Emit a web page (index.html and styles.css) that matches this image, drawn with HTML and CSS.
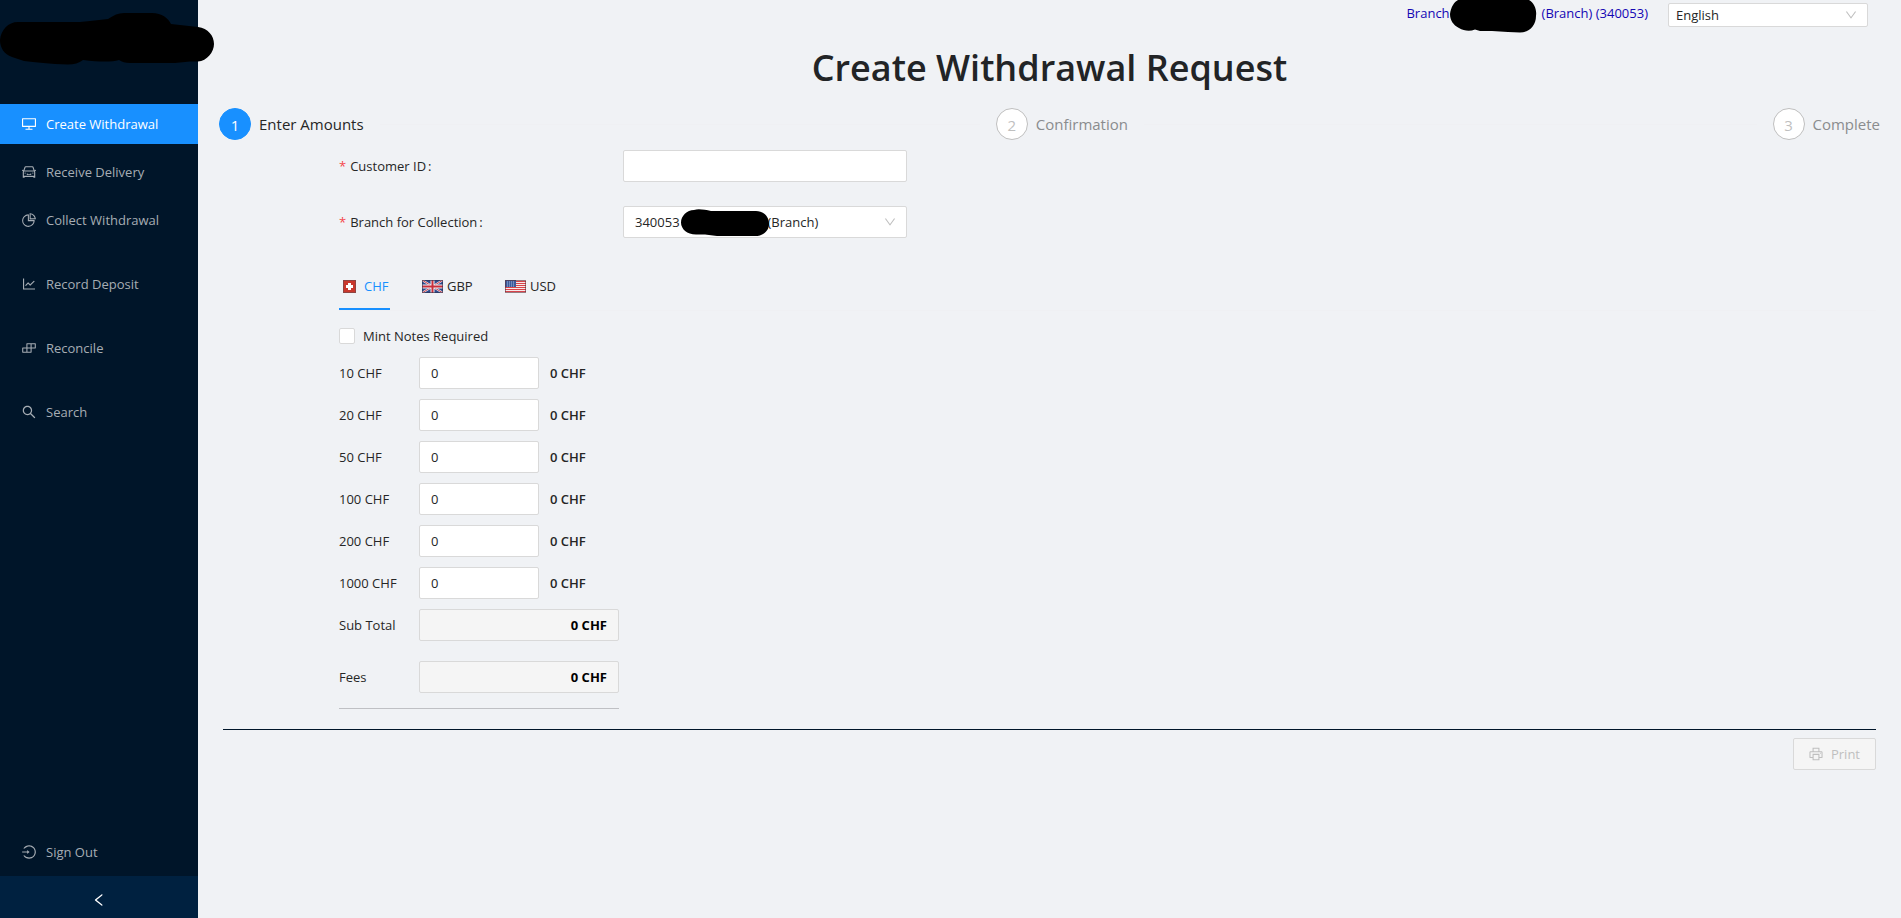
FILE: index.html
```html
<!DOCTYPE html>
<html lang="en">
<head>
<meta charset="utf-8">
<title>Create Withdrawal Request</title>
<link rel="stylesheet" href="styles.css">
</head>
<body>
<div class="app">
  <aside class="sidebar">
    <div class="brand">
      <svg class="brand-mask" width="215" height="66" viewBox="0 0 215 66" aria-hidden="true"><path d="M0 40C1 30 8 22 18 22H80L90 21 108 19C114 15 118 13 124 13H152C162 13 168 18 171 24L198 27C208 28 214 36 214 44S207 61 198 61.500H190L175 63H130C125 63 122 62 119 60 112 62 100 62 83 60 79 63 74 64.500 68 64.500 50 64 35 62 24 61L12 57C4 54 0 48 0 40Z"/></svg>
    </div>
    <nav class="menu">
      <div class="menu-group">
        <a class="menu-item active" href="#"><svg class="icon" viewBox="64 64 896 896"><path d="M928 140H96c-17.700 0-32 14.300-32 32v496c0 17.700 14.300 32 32 32h380v112H304c-8.800 0-16 7.200-16 16v48c0 4.400 3.600 8 8 8h432c4.400 0 8-3.600 8-8v-48c0-8.800-7.200-16-16-16H548V700h380c17.700 0 32-14.300 32-32V172c0-17.700-14.300-32-32-32zm-40 488H136V212h752v416z"/></svg>Create Withdrawal</a>
        <a class="menu-item" href="#"><svg class="icon" viewBox="64 64 896 896"><path d="M380 704h264c4.400 0 8-3.600 8-8v-84c0-4.400-3.600-8-8-8h-40c-4.400 0-8 3.600-8 8v36H428v-36c0-4.400-3.600-8-8-8h-40c-4.400 0-8 3.600-8 8v84c0 4.400 3.600 8 8 8zm340-123a40 40 0 1080 0 40 40 0 10-80 0zm239-167.600L935.300 372a8 8 0 00-10.900-2.900l-50.700 29.600-78.300-216.200a63.900 63.900 0 00-60.900-44.400H301.200c-34.700 0-65.500 22.400-76.200 55.500l-74.600 205.200-50.800-29.600a8 8 0 00-10.900 2.900L65 413.400c-2.200 3.800-.9 8.600 2.900 10.800l60.400 35.200-14.500 40c-1.200 3.200-1.800 6.600-1.800 10v348.200c0 15.700 11.800 28.400 26.300 28.400h67.600c12.300 0 23-9.300 25.600-22.300l7.700-37.700h545.600l7.700 37.700c2.700 13 13.300 22.300 25.600 22.300h67.600c14.500 0 26.300-12.700 26.300-28.400V509.400c0-3.400-.6-6.800-1.800-10l-14.500-40 60.300-35.200a8 8 0 003-10.800zM840 517v237H184V517l15.600-43h624.800l15.600 43zM292.700 218.100l.5-1.300.4-1.300c1.100-3.300 4.100-5.500 7.600-5.500h427.600l75.400 208H220l72.700-199.900zM224 581a40 40 0 1080 0 40 40 0 10-80 0z"/></svg>Receive Delivery</a>
        <a class="menu-item" href="#"><svg class="icon" viewBox="64 64 896 896"><path d="M864 518H506V160c0-4.400-3.600-8-8-8h-26a398.460 398.460 0 00-282.800 117.100 398.190 398.190 0 00-85.700 127.100A397.610 397.610 0 0072 552a398.460 398.460 0 00117.100 282.800c36.700 36.700 79.500 65.600 127.100 85.700A397.610 397.610 0 00472 952a398.460 398.460 0 00282.800-117.100c36.700-36.700 65.600-79.500 85.700-127.100A397.610 397.610 0 00872 552v-26c0-4.400-3.600-8-8-8zM705.700 787.800A331.590 331.590 0 01470.400 884c-88.100-.4-170.900-34.900-233.200-97.200C174.500 724.100 140 640.700 140 552c0-88.700 34.500-172.100 97.200-234.800 54.600-54.600 124.900-87.900 200.800-95.500V586h364.300c-7.700 76.300-41.300 147-96.600 201.800zM952 462.400l-2.600-28.200c-8.500-92.100-49.400-179-115.200-244.600A399.400 399.400 0 00589 74.600L560.700 72c-4.700-.4-8.700 3.200-8.700 7.900V464c0 4.400 3.600 8 8 8l384-1c4.700 0 8.400-4 8-8.600zm-332.200-58.200V147.600a332.240 332.240 0 01166.400 89.800c45.700 45.600 77 103.600 90 166.100l-256.400.7z"/></svg>Collect Withdrawal</a>
      </div>
      <div class="menu-group">
        <a class="menu-item" href="#"><svg class="icon" viewBox="64 64 896 896"><path d="M888 792H200V168c0-4.400-3.600-8-8-8h-56c-4.400 0-8 3.600-8 8v688c0 4.400 3.600 8 8 8h752c4.400 0 8-3.600 8-8v-56c0-4.400-3.600-8-8-8zM305.800 637.700c3.100 3.100 8.100 3.100 11.300 0l138.300-137.600L583 628.500c3.100 3.100 8.200 3.100 11.300 0l275.400-275.300c3.100-3.100 3.100-8.200 0-11.300l-39.600-39.600a8.030 8.030 0 00-11.300 0l-230 229.900L461.400 404a8.030 8.030 0 00-11.300 0L266.300 586.700a8.030 8.030 0 000 11.300l39.500 39.700z"/></svg>Record Deposit</a>
      </div>
      <div class="menu-group">
        <a class="menu-item" href="#"><svg class="icon" viewBox="64 64 896 896"><path d="M916 210H376c-17.700 0-32 14.300-32 32v236H108c-17.700 0-32 14.300-32 32v272c0 17.700 14.300 32 32 32h540c17.700 0 32-14.300 32-32V546h236c17.700 0 32-14.300 32-32V242c0-17.700-14.300-32-32-32zm-504 68h200v200H412V278zm-68 468H144V546h200v200zm268 0H412V546h200v200zm268-268H680V278h200v200z"/></svg>Reconcile</a>
      </div>
      <div class="menu-group">
        <a class="menu-item" href="#"><svg class="icon" viewBox="64 64 896 896"><path d="M909.600 854.500L649.900 594.800C690.200 542.700 712 479 712 412c0-80.200-31.300-155.400-87.900-212.100-56.600-56.700-132-87.900-212.100-87.900s-155.500 31.300-212.100 87.900C143.200 256.500 112 331.800 112 412c0 80.100 31.300 155.500 87.900 212.100C256.500 680.800 331.800 712 412 712c67 0 130.600-21.800 182.700-62l259.700 259.600a8.200 8.200 0 0011.600 0l43.600-43.500a8.200 8.200 0 000-11.600zM570.400 570.400C528 612.700 471.800 636 412 636s-116-23.300-158.400-65.600C211.300 528 188 471.800 188 412s23.300-116.100 65.600-158.400C296 211.300 352.200 188 412 188s116.100 23.200 158.400 65.600S636 352.200 636 412s-23.300 116.100-65.600 158.400z"/></svg>Search</a>
      </div>
    </nav>
    <a class="menu-item sign-out" href="#"><svg class="icon" viewBox="64 64 896 896"><path d="M521.700 82c-152.500-.4-286.700 78.500-363.400 197.700-3.400 5.300.4 12.300 6.700 12.300h70.300c4.800 0 9.300-2.100 12.300-5.800 7-8.500 14.500-16.700 22.400-24.500 32.600-32.500 70.500-58.100 112.700-75.900 43.600-18.400 90-27.800 137.900-27.800 47.900 0 94.300 9.300 137.900 27.800 42.200 17.800 80.100 43.400 112.700 75.900 32.600 32.500 58.100 70.400 76 112.500C865.700 417.800 875 464.100 875 512c0 47.900-9.400 94.200-27.800 137.800-17.800 42.100-43.400 80-76 112.500s-70.500 58.100-112.700 75.900A352.800 352.800 0 01520.600 866c-47.900 0-94.300-9.400-137.900-27.800A353.840 353.840 0 01270 762.300c-7.900-7.900-15.300-16.100-22.400-24.500-3-3.700-7.600-5.800-12.300-5.800H165c-6.300 0-10.200 7-6.700 12.300C234.900 863.200 368.500 942 520.600 942c236.200 0 428-190.100 430.400-425.600C953.400 277.100 761.300 82.600 521.700 82zM395.020 624v-76h-314c-4.400 0-8-3.600-8-8v-56c0-4.400 3.600-8 8-8h314v-76c0-6.700 7.800-10.500 13-6.300l141.900 112a8 8 0 010 12.600l-141.900 112c-5.200 4.100-13 .4-13-6.300z"/></svg>Sign Out</a>
    <button class="collapse" type="button" aria-label="Collapse menu"><svg class="icon" viewBox="64 64 896 896"><path d="M724 218.300V141c0-6.700-7.700-10.400-12.900-6.300L260.300 486.800a31.860 31.860 0 000 50.300l450.800 352.100c5.300 4.100 12.900.4 12.900-6.300v-77.300c0-4.900-2.300-9.600-6.100-12.600l-360-281 360-281.100c3.800-3 6.100-7.700 6.100-12.600z"/></svg></button>
  </aside>

  <main class="main">
    <header class="topbar">
      <div class="branch">
        <span>Branch</span>
        <svg class="branch-mask" width="87" height="34" viewBox="0 0 87 34" aria-hidden="true"><path d="M0 14C1 7 4 2 8 0H79C84 3 87 9 86 16 86 26 79 32.500 70 32.500L58 32 42 31H30L25 29.500C20 31.500 14 31 9 28 3 25 0 20 0 14Z"/></svg>
        <span>(Branch) (340053)</span>
      </div>
      <div class="select select-small">
        <select aria-label="Language"><option>English</option></select>
        <svg class="arrow" viewBox="64 64 896 896"><path d="M884 256h-75c-5.100 0-9.900 2.500-12.900 6.600L512 654.200 227.900 262.600c-3-4.100-7.800-6.600-12.900-6.600h-75c-6.500 0-10.300 7.400-6.500 12.700l352.600 486.100c12.800 17.600 39 17.600 51.700 0l352.600-486.100c3.900-5.300.1-12.700-6.400-12.700z"/></svg>
      </div>
    </header>

    <h1 class="title">Create Withdrawal Request</h1>

    <ol class="steps">
      <li class="step current"><span class="step-dot">1</span><span class="step-name">Enter Amounts</span></li>
      <li class="step"><span class="step-dot">2</span><span class="step-name">Confirmation</span></li>
      <li class="step"><span class="step-dot">3</span><span class="step-name">Complete</span></li>
    </ol>

    <form class="form">
      <div class="fields">
        <div class="field">
          <label for="customer"><span class="required">*</span>Customer ID<span class="colon">:</span></label>
          <input class="box" id="customer" type="text">
        </div>
        <div class="field">
          <label for="branch"><span class="required">*</span>Branch for Collection<span class="colon">:</span></label>
          <div class="select">
            <select id="branch"><option>340053&emsp;&emsp;&emsp;&emsp;&emsp;&emsp;&ensp;&nbsp;(Branch)</option></select>
            <svg class="select-mask" width="88" height="28" viewBox="0 0 88 28" aria-hidden="true"><path d="M13 1C18-.5 24 1 30 2H75C83 2 88 8 88 15S82 27 74 27H36L24 25.500H15C6 25.500 0 20 0 13.500 0 7 6 1 13 1Z"/></svg>
            <svg class="arrow" viewBox="64 64 896 896"><path d="M884 256h-75c-5.100 0-9.900 2.500-12.900 6.600L512 654.200 227.900 262.600c-3-4.100-7.800-6.600-12.900-6.600h-75c-6.500 0-10.300 7.400-6.500 12.700l352.600 486.100c12.800 17.600 39 17.600 51.700 0l352.600-486.100c3.900-5.300.1-12.700-6.400-12.700z"/></svg>
          </div>
        </div>

        <div class="tabs" role="tablist">
          <button class="tab selected" type="button" role="tab" aria-selected="true">
            <svg class="flag" viewBox="0 0 21 13"><rect x="4" width="13" height="13" fill="#8f4442"/><rect x="5" y="1" width="11" height="11" fill="#c9372c"/><path d="M9 3h3v2h2v3h-2v2H9V8H7V5h2z" fill="#fff"/></svg>CHF</button>
          <button class="tab" type="button" role="tab" aria-selected="false">
            <svg class="flag" viewBox="0 0 21 13"><rect width="21" height="13" fill="#2f4a8c"/><path d="M0 0l21 13M21 0L0 13" stroke="#e6e9f2" stroke-width="2"/><path d="M0 0l21 13M21 0L0 13" stroke="#d0404a"/><path d="M10.500 0v13M0 6.500h21" stroke="#f0f0f4" stroke-width="4"/><path d="M10.500 0v13M0 6.500h21" stroke="#c9303c" stroke-width="2"/><rect x=".5" y=".5" width="20" height="12" fill="none" stroke="#30344f" stroke-opacity=".6"/></svg>GBP</button>
          <button class="tab" type="button" role="tab" aria-selected="false">
            <svg class="flag" viewBox="0 0 21 13"><rect width="21" height="13" fill="#f6e9ea"/><path d="M0 1.500h21M0 3.500h21M0 5.500h21M0 7.500h21M0 9.500h21M0 11.500h21" stroke="#d8434a"/><rect width="11" height="7" fill="#3c5a9c"/><path d="M2 2h8M2 4h8M2 6h8" stroke="#a9b9dc" stroke-dasharray="1 1"/><rect x=".5" y=".5" width="20" height="12" fill="none" stroke="#5a3038" stroke-opacity=".6"/></svg>USD</button>
        </div>

        <label class="check"><input type="checkbox">Mint Notes Required</label>

        <div class="rows">
          <div class="row"><label for="n10">10 CHF</label><input class="box" id="n10" type="text" value="0"><output>0 CHF</output></div>
          <div class="row"><label for="n20">20 CHF</label><input class="box" id="n20" type="text" value="0"><output>0 CHF</output></div>
          <div class="row"><label for="n50">50 CHF</label><input class="box" id="n50" type="text" value="0"><output>0 CHF</output></div>
          <div class="row"><label for="n100">100 CHF</label><input class="box" id="n100" type="text" value="0"><output>0 CHF</output></div>
          <div class="row"><label for="n200">200 CHF</label><input class="box" id="n200" type="text" value="0"><output>0 CHF</output></div>
          <div class="row"><label for="n1000">1000 CHF</label><input class="box" id="n1000" type="text" value="0"><output>0 CHF</output></div>
        </div>
        <div class="totals">
          <div class="total"><label for="sub">Sub Total</label><input class="box" id="sub" type="text" value="0 CHF" disabled></div>
          <div class="total"><label for="fees">Fees</label><input class="box" id="fees" type="text" value="0 CHF" disabled></div>
        </div>
      </div>
      <div class="actions">
        <button class="print" type="button" disabled><svg class="icon" viewBox="64 64 896 896"><path d="M820 436h-40c-4.400 0-8 3.600-8 8v40c0 4.400 3.600 8 8 8h40c4.400 0 8-3.600 8-8v-40c0-4.400-3.600-8-8-8zm32-104H732V120c0-4.400-3.600-8-8-8H300c-4.400 0-8 3.600-8 8v212H172c-44.200 0-80 35.800-80 80v328c0 17.700 14.300 32 32 32h168v132c0 4.400 3.600 8 8 8h424c4.400 0 8-3.600 8-8V772h168c17.700 0 32-14.300 32-32V412c0-44.200-35.800-80-80-80zM360 180h304v152H360V180zm304 664H360V568h304v276zm200-140H732V500H292v204H160V412c0-6.600 5.400-12 12-12h680c6.600 0 12 5.400 12 12v292z"/></svg>Print</button>
      </div>
    </form>
  </main>
</div>
</body>
</html>
```

FILE: styles.css
```css
*, *::before, *::after { box-sizing: border-box; }

body {
  margin: 0;
  background: #f0f2f5;
  color: #262626;
  font: 13px/22px "Open Sans", "Noto Sans", sans-serif;
}

input, select, button { font: inherit; color: inherit; margin: 0; }

.app { display: flex; min-height: 100vh; }

.icon { width: 14px; height: 14px; fill: currentColor; flex: none; }

/* Sidebar */
.sidebar {
  width: 198px;
  flex: none;
  display: flex;
  flex-direction: column;
  background: #001529;
}
.brand { position: relative; height: 104px; }
.brand-mask { position: absolute; left: 0; top: 0; z-index: 1; }
.menu { flex: 1; display: flex; flex-direction: column; gap: 24px; }
.menu-group { display: flex; flex-direction: column; gap: 8px; }
.menu-item {
  display: flex;
  align-items: center;
  gap: 10px;
  height: 40px;
  padding: 0 22px;
  color: #a6adb4;
  text-decoration: none;
  white-space: nowrap;
}
.menu-item.active { background: #1890ff; color: #fff; }
.sign-out { margin-bottom: 4px; }
.collapse {
  height: 42px;
  border: 0;
  padding: 6px 0 0;
  background: #002140;
  color: #fff;
  display: flex;
  align-items: center;
  justify-content: center;
}

/* Main column */
.main { flex: 1; min-width: 0; padding: 0 21px; }

.topbar {
  display: flex;
  justify-content: flex-end;
  gap: 20px;
  padding: 3px 12px 0 0;
}
.branch { display: flex; height: 22px; color: #1406b4; line-height: 20px; }
.branch-mask { margin: -3px 5px 0 0; }

.title {
  margin: 15px 0 0;
  font-size: 36px;
  font-weight: 600;
  line-height: 52px;
  text-align: center;
  color: #222426;
}

.steps {
  display: flex;
  gap: 16px;
  list-style: none;
  margin: 14px 0 0;
  padding: 0;
  font-size: 15px;
}
.step { display: flex; align-items: center; flex: 1; color: #8a8c8e; }
.step:last-child { flex: none; }
.step:not(:last-child)::after {
  content: "";
  flex: 1;
  height: 1px;
  margin-left: 16px;
  background: #eff0f3;
}
.step-dot {
  width: 32px;
  height: 32px;
  margin-right: 8px;
  border: 1px solid #bfbfbf;
  border-radius: 50%;
  background: #fff;
  color: #bfbfbf;
  line-height: 32px;
  text-align: center;
}
.current { color: #262626; }
.current .step-dot { background: #1890ff; border-color: #1890ff; color: #fff; }

/* Form */
.form { padding: 10px 4px 0; }
.fields { padding-left: 116px; }
.field {
  display: grid;
  grid-template-columns: 284px 284px;
  align-items: center;
  margin-bottom: 24px;
}
.required { color: #f5464a; margin-right: 4px; }
.colon { margin-left: 2px; }

.box {
  width: 100%;
  height: 32px;
  padding: 0 11px;
  border: 1px solid #d9d9d9;
  border-radius: 2px;
  background: #fff;
}
.box:disabled { background: #f5f5f5; color: #000; font-weight: 700; text-align: right; }

.select { position: relative; }
.select select {
  display: block;
  width: 100%;
  height: 32px;
  padding: 0 11px;
  border: 1px solid #d9d9d9;
  border-radius: 2px;
  background: #fff;
  appearance: none;
}
.arrow {
  position: absolute;
  right: 11px;
  top: 50%;
  width: 12px;
  height: 12px;
  margin-top: -6px;
  fill: #bfbfbf;
  pointer-events: none;
}
.select-mask { position: absolute; left: 58px; top: 3px; }
.select-small { width: 200px; }
.select-small select { height: 24px; padding: 0 7px; }

.tabs {
  display: flex;
  gap: 32px;
  margin-top: 26px;
  border-bottom: 1px solid #eff0f3;
}
.tab {
  display: flex;
  align-items: center;
  gap: 4px;
  min-width: 51px;
  height: 46px;
  padding: 0;
  border: 0;
  border-bottom: 2px solid transparent;
  background: none;
}
.tab.selected { color: #1890ff; border-color: #1890ff; }
.flag { width: 21px; height: 13px; }

.check { display: flex; align-items: center; gap: 8px; margin: 14px 0 10px; }
.check input {
  width: 16px;
  height: 16px;
  border: 1px solid #d9d9d9;
  border-radius: 2px;
  background: #fff;
  appearance: none;
}

.rows { display: flex; flex-direction: column; gap: 10px; }
.row { display: grid; grid-template-columns: 80px 120px auto; align-items: center; }
.row output { margin-left: 11px; font-weight: 600; }
.totals {
  display: flex;
  flex-direction: column;
  gap: 20px;
  width: 280px;
  margin-top: 10px;
  padding-bottom: 15px;
  border-bottom: 1px solid #bfc0c4;
}
.total { display: grid; grid-template-columns: 80px 1fr; align-items: center; }

.actions {
  display: flex;
  justify-content: flex-end;
  margin-top: 20px;
  padding-top: 8px;
  border-top: 1px solid #001529;
}
.print {
  display: flex;
  align-items: center;
  gap: 8px;
  height: 32px;
  padding: 0 15px;
  border: 1px solid #d9d9d9;
  border-radius: 2px;
  background: #f5f5f5;
  color: #bfbfbf;
}
```
